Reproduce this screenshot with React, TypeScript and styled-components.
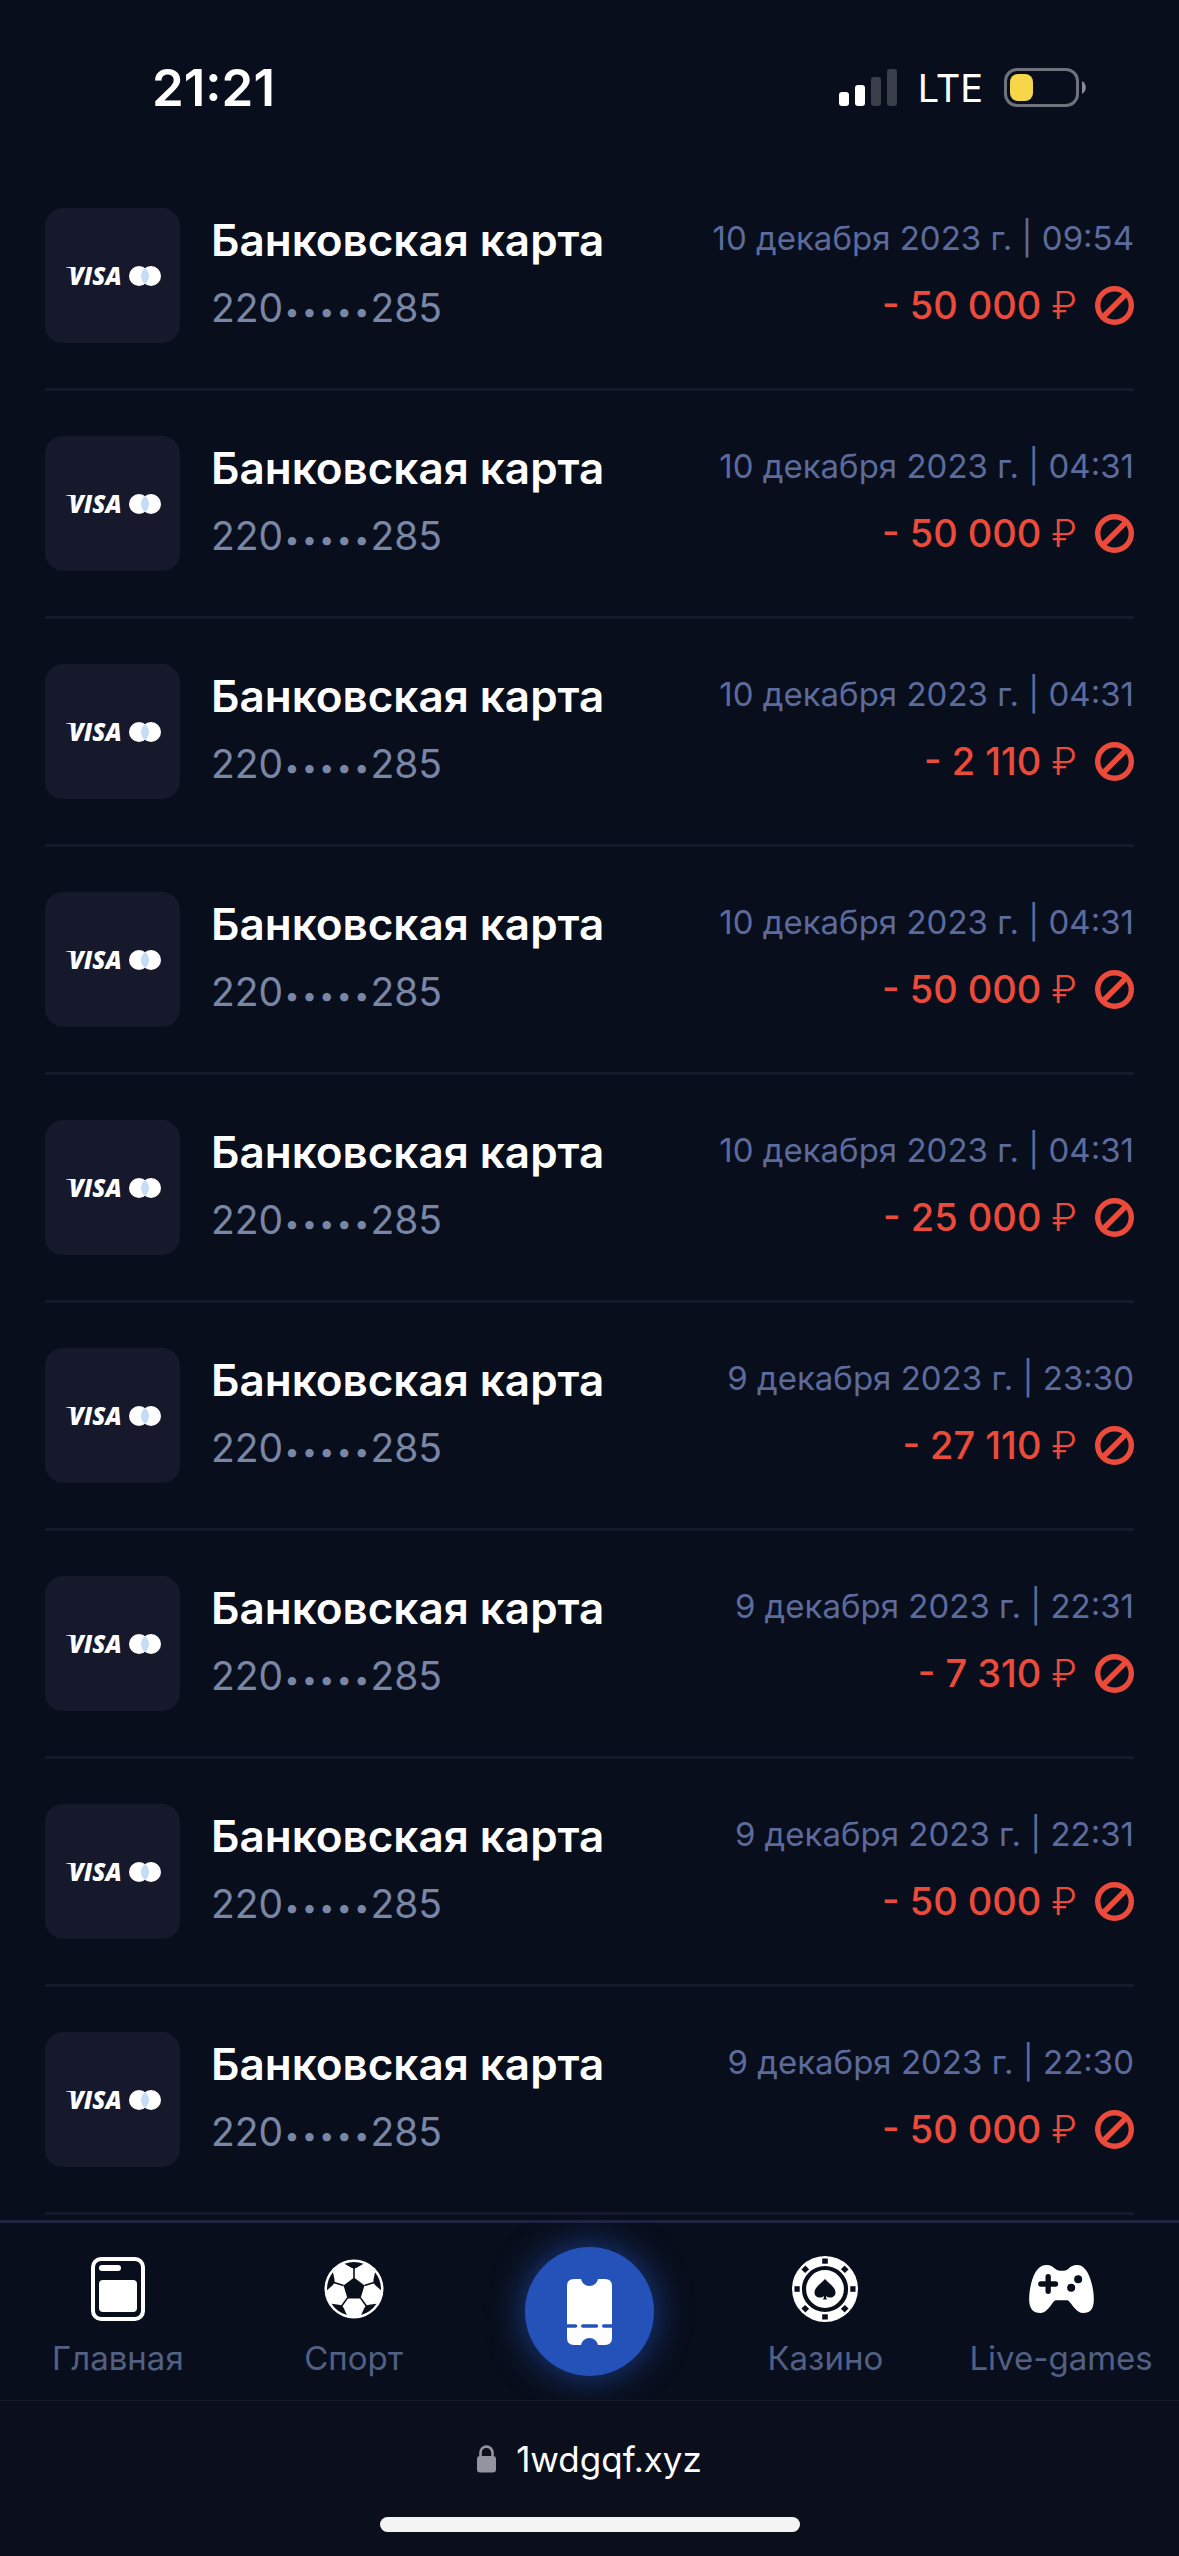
import React from "react";
import styled, { createGlobalStyle } from "styled-components";

const color = {
  page: "#080e1b",
  tile: "#15192b",
  navBorder: "#20243f",
  text: "#ffffff",
  card: "#7986a6",
  date: "#5c6b9c",
  nav: "#526085",
  danger: "#ec4b3c",
  accent: "#2452b9",
};

const GlobalStyle = createGlobalStyle`
  *, *::before, *::after { box-sizing: border-box; }
  body {
    margin: 0;
    background: ${color.page};
    color: ${color.text};
    font-family: Inter, "Noto Sans", sans-serif;
  }
`;

const Page = styled.div`
  display: flex;
  flex-direction: column;
  min-height: 100vh;
`;

const StatusBar = styled.header`
  display: flex;
  align-items: center;
  justify-content: space-between;
  height: 163px;
  padding: 12px 93px 0 152px;
`;

const Clock = styled.time`
  font-size: 51px;
  font-weight: 600;
  line-height: 64px;
`;

const Indicators = styled.div`
  display: flex;
  align-items: center;
  gap: 21px;
`;

const Network = styled.span`
  font-size: 38px;
  font-weight: 400;
  line-height: 48px;
`;

const List = styled.ul`
  list-style: none;
  margin: 0 0 5px;
  padding: 0 45px;
`;

const Row = styled.li`
  display: flex;
  gap: 31px;
  padding: 45px 0;
  border-bottom: 3px solid ${color.tile};
`;

const Tile = styled.div`
  display: flex;
  align-items: center;
  justify-content: center;
  flex: none;
  width: 135px;
  height: 135px;
  border-radius: 18px;
  background: ${color.tile};
`;

const Method = styled.div`
  display: flex;
  flex-direction: column;
  flex: 1;
  gap: 4px;
  min-width: 0;
`;

const Title = styled.h2`
  margin: 0;
  font-size: 44px;
  font-weight: 600;
  line-height: 64px;
  white-space: nowrap;
`;

const CardNumber = styled.span`
  color: ${color.card};
  font-size: 39px;
  line-height: 64px;
  white-space: nowrap;
`;

const Mask = styled.span`
  font-size: 31px;
  font-weight: 300;
`;

const Summary = styled.div`
  display: flex;
  flex-direction: column;
  align-items: flex-end;
  gap: 7px;
`;

const DateText = styled.time`
  color: ${color.date};
  font-size: 33px;
  line-height: 60px;
  white-space: nowrap;
`;

const Amount = styled.div`
  display: flex;
  align-items: center;
  gap: 18px;
  color: ${color.danger};
  font-size: 38px;
  font-weight: 500;
  line-height: 60px;
  white-space: nowrap;
`;

const Currency = styled.span`
  font-weight: 300;
`;

const Nav = styled.nav`
  display: grid;
  grid-template-columns: repeat(5, 1fr);
  height: 180px;
  margin-top: auto;
  border-top: 3px solid ${color.navBorder};
`;

const NavItem = styled.a`
  display: flex;
  flex-direction: column;
  align-items: center;
  gap: 16px;
  padding-top: 33px;
  color: ${color.nav};
  font-size: 33px;
  line-height: 40px;
  text-decoration: none;
  white-space: nowrap;
`;

const IconBox = styled.span`
  display: flex;
  align-items: center;
  justify-content: center;
  height: 66px;
`;

const CouponButton = styled.button`
  display: flex;
  align-items: center;
  justify-content: center;
  place-self: center;
  width: 129px;
  height: 129px;
  padding: 0;
  border: 0;
  border-radius: 50%;
  background: ${color.accent};
  box-shadow: 0 0 36px rgba(36, 82, 185, 0.75);
`;

const BrowserBar = styled.footer`
  display: flex;
  flex-direction: column;
  align-items: center;
  height: 156px;
  padding-top: 34px;
  border-top: 1px solid #161927;
  background: #0a0f1b;
`;

const Address = styled.a`
  display: flex;
  align-items: center;
  gap: 20px;
  color: ${color.text};
  font-size: 35px;
  line-height: 48px;
  text-decoration: none;
`;

const HomeIndicator = styled.div`
  width: 420px;
  height: 15px;
  margin-top: 34px;
  border-radius: 8px;
  background: #f4f4f4;
`;

const SignalIcon = () => (
  <svg width="58" height="37" viewBox="0 0 58 37" aria-hidden="true">
    <rect x="0" y="23" width="10" height="14" rx="3" fill="#fff" />
    <rect x="16" y="16" width="10" height="21" rx="3" fill="#fff" />
    <rect x="32" y="8" width="10" height="29" rx="3" fill="#3b3f49" />
    <rect x="48" y="0" width="10" height="37" rx="3" fill="#3b3f49" />
  </svg>
);

const BatteryIcon = () => (
  <svg width="82" height="39" viewBox="0 0 82 39" aria-hidden="true">
    <rect x="1.5" y="1.5" width="72" height="36" rx="11.5" fill="none" stroke="#6f727b" strokeWidth="3" />
    <rect x="6" y="6" width="23" height="27" rx="8" fill="#f8d64a" />
    <path d="M78 13c5 2.500 5 10.500 0 13z" fill="#8b8d94" />
  </svg>
);

const CardLogos = () => (
  <svg width="96" height="44" viewBox="0 -10 96 44" role="img" aria-label="Visa, Mastercard">
    <path d="M1 3h9l1 3C7 4 4 4 1 3.500z" fill="#fff" />
    <text x="4" y="21" fill="#fff" fontFamily="Open Sans" fontSize="24" fontWeight="800" fontStyle="italic">
      VISA
    </text>
    <circle cx="74" cy="12" r="10" fill="#fff" />
    <circle cx="86" cy="12" r="10" fill="#fff" />
    <path d="M80 4a10 10 0 0 1 0 16a10 10 0 0 1 0-16z" fill="#c5dcf6" />
  </svg>
);

const DeclinedIcon = () => (
  <svg width="39" height="39" viewBox="0 0 39 39" fill="none" stroke={color.danger} strokeWidth="5.4" role="img" aria-label="Отклонено">
    <circle cx="19.5" cy="19.5" r="16.8" />
    <path d="M8 31L31 8" />
  </svg>
);

const HomeIcon = () => (
  <svg width="54" height="64" viewBox="0 0 54 64" aria-hidden="true">
    <rect x="2" y="2" width="50" height="60" rx="8" fill="none" stroke="#fff" strokeWidth="4" />
    <rect x="8" y="8" width="22" height="6" rx="3" fill="#fff" />
    <rect x="8" y="23" width="38" height="32" rx="4" fill="#fff" />
  </svg>
);

const BallIcon = () => (
  <svg width="60" height="60" viewBox="-30 -30 60 60" aria-hidden="true">
    <circle r="29.5" fill="#fff" />
    <path d="M0-11.500L10.500-3.600L6.500 9.600H-6.500L-10.500-3.600z" fill={color.page} />
    {[0, 72, 144, 216, 288].map((a) => (
      <g key={a} transform={`rotate(${a})`}>
        <path d="M0-11V-21" stroke={color.page} strokeWidth="1.6" />
        <path d="M0-20.300L-3-21.500L-9.500-25.200A27 27 0 0 1 9.500-25.200L3-21.500z" fill={color.page} />
      </g>
    ))}
  </svg>
);

const CouponIcon = () => (
  <svg width="45" height="66" viewBox="0 0 45 66" aria-hidden="true">
    <path
      d="M7 0H14C15 4 18 7 22.500 7S30 4 31 0H38Q45 0 45 7V59Q45 66 38 66H31C30 62 27 59 22.500 59S15 62 14 66H7Q0 66 0 59V7Q0 0 7 0z"
      fill="#fff"
    />
    <path d="M0 47H8.500M15.800 47H29.400M36.800 47H45" stroke={color.accent} strokeWidth="3.6" strokeLinecap="round" />
  </svg>
);

const ChipIcon = () => (
  <svg width="66" height="66" viewBox="-33 -33 66 66" aria-hidden="true">
    <circle r="33" fill="#fff" />
    <circle r="21" fill="none" stroke={color.page} strokeWidth="4.2" />
    {[0, 45, 90, 135, 180, 225, 270, 315].map((a) => (
      <rect key={a} x="-2.800" y="-30.500" width="5.600" height="5.200" fill={color.page} transform={`rotate(${a})`} />
    ))}
    <path
      d="M0-10C3-6 10.500-2 10.500 3.500C10.500 8.500 4.500 10 1 7C1 8.500 1.500 9.500 2 10.500H-2C-1.500 9.500-1 8.500-1 7C-4.500 10-10.500 8.500-10.500 3.500C-10.500-2-3-6 0-10z"
      fill={color.page}
    />
  </svg>
);

const GamepadIcon = () => (
  <svg width="65" height="48" viewBox="0 0 194 144" aria-hidden="true">
    <path
      d="M50 0C66 0 72 6 80 13C88 19 108 19 116 13C124 5 130 0 146 0C176 0 194 60 194 104C194 130 184 144 162 144C144 144 134 126 122 112C118 107 116 106 110 106H84C78 106 76 107 72 112C60 128 50 144 34 144C12 144 0 130 0 104C0 60 16 0 50 0Z"
      fill="#fff"
    />
    <path d="M57 35V79M35 57H79" stroke={color.page} strokeWidth="16" strokeLinecap="round" />
    <circle cx="147" cy="43" r="12" fill={color.page} />
    <circle cx="126" cy="68" r="12" fill={color.page} />
  </svg>
);

const LockIcon = () => (
  <svg width="19" height="28" viewBox="0 0 19 28" aria-hidden="true">
    <path d="M3.500 13V8C3.500 -0.500 15.500 -0.500 15.500 8V13" fill="none" stroke="#9294a0" strokeWidth="2.600" />
    <rect y="11" width="19" height="16.500" rx="3" fill="#9294a0" />
  </svg>
);

const payments = [
  { date: "10 декабря 2023 г. | 09:54", amount: "50 000" },
  { date: "10 декабря 2023 г. | 04:31", amount: "50 000" },
  { date: "10 декабря 2023 г. | 04:31", amount: "2 110" },
  { date: "10 декабря 2023 г. | 04:31", amount: "50 000" },
  { date: "10 декабря 2023 г. | 04:31", amount: "25 000" },
  { date: "9 декабря 2023 г. | 23:30", amount: "27 110" },
  { date: "9 декабря 2023 г. | 22:31", amount: "7 310" },
  { date: "9 декабря 2023 г. | 22:31", amount: "50 000" },
  { date: "9 декабря 2023 г. | 22:30", amount: "50 000" },
];

const NavLink = ({ label, children }: { label: string; children: React.ReactNode }) => (
  <NavItem href="#">
    <IconBox>{children}</IconBox>
    {label}
  </NavItem>
);

export default function App() {
  return (
    <Page>
      <GlobalStyle />
      <StatusBar>
        <Clock>21:21</Clock>
        <Indicators>
          <SignalIcon />
          <Network>LTE</Network>
          <BatteryIcon />
        </Indicators>
      </StatusBar>
      <List>
        {payments.map((payment, index) => (
          <Row key={index}>
            <Tile>
              <CardLogos />
            </Tile>
            <Method>
              <Title>Банковская карта</Title>
              <CardNumber>
                220<Mask>•••••</Mask>285
              </CardNumber>
            </Method>
            <Summary>
              <DateText>{payment.date}</DateText>
              <Amount>
                <span>
                  - {payment.amount} <Currency>₽</Currency>
                </span>
                <DeclinedIcon />
              </Amount>
            </Summary>
          </Row>
        ))}
      </List>
      <Nav>
        <NavLink label="Главная">
          <HomeIcon />
        </NavLink>
        <NavLink label="Спорт">
          <BallIcon />
        </NavLink>
        <CouponButton type="button" aria-label="Купон">
          <CouponIcon />
        </CouponButton>
        <NavLink label="Казино">
          <ChipIcon />
        </NavLink>
        <NavLink label="Live-games">
          <GamepadIcon />
        </NavLink>
      </Nav>
      <BrowserBar>
        <Address href="#">
          <LockIcon />
          1wdgqf.xyz
        </Address>
        <HomeIndicator />
      </BrowserBar>
    </Page>
  );
}
